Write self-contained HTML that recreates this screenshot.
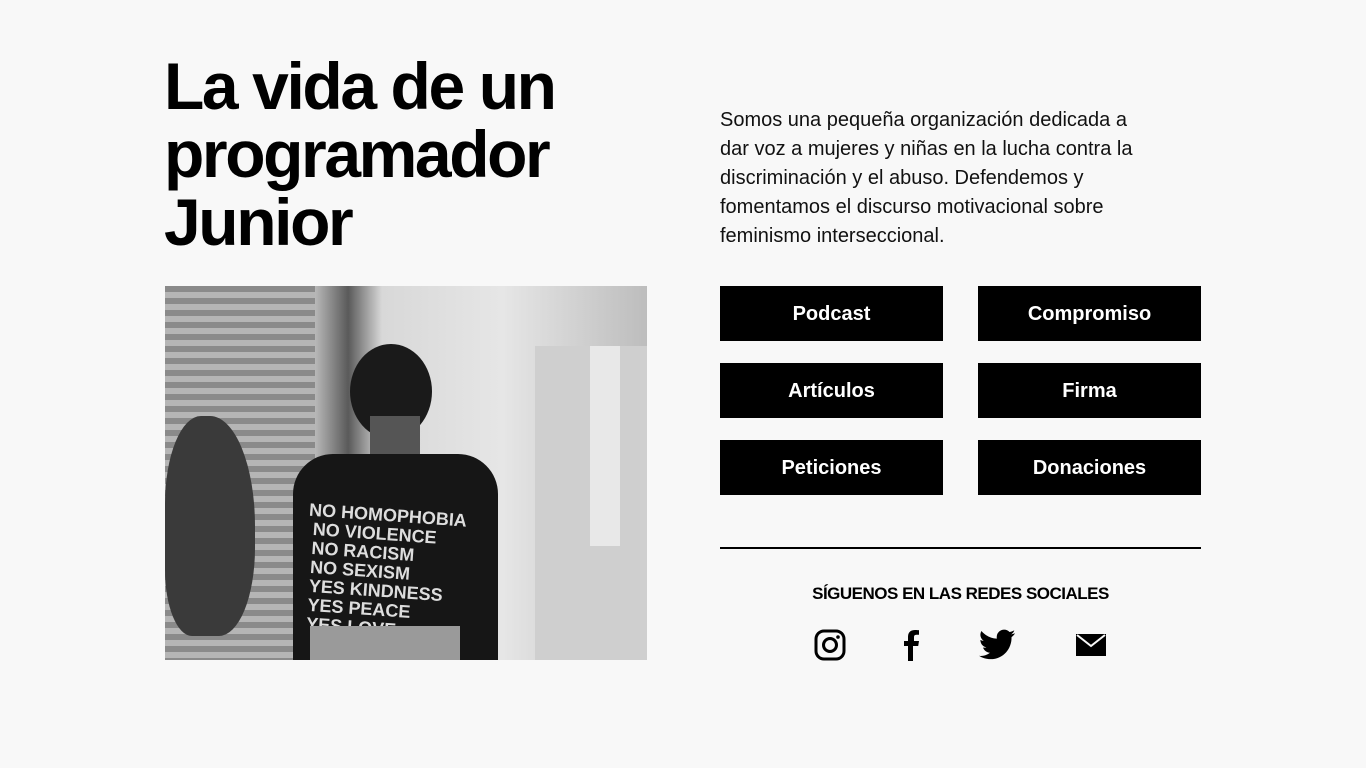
<!DOCTYPE html>
<html><head><meta charset="utf-8"><style>
*{margin:0;padding:0;box-sizing:border-box}
body{width:1366px;height:768px;background:#f8f8f8;font-family:"Liberation Sans",sans-serif;position:relative;overflow:hidden;color:#000}
h1{position:absolute;left:164px;top:52px;font-size:66px;line-height:68px;font-weight:bold;letter-spacing:-2.4px;width:480px}
.photo{position:absolute;left:165px;top:286px;width:482px;height:374px;overflow:hidden;background:linear-gradient(90deg,#9a9a9a 0%,#c8c8c8 30%,#5a5a5a 38%,#d8d8d8 45%,#e6e6e6 70%,#bdbdbd 100%)}
p{position:absolute;left:720px;top:106px;width:436px;font-size:20px;line-height:29px;color:#111}
.btn{position:absolute;width:223px;height:55px;background:#000;color:#fff;font-size:20px;font-weight:bold;text-align:center;line-height:55px;padding-top:1px}
.line{position:absolute;left:720px;top:547px;width:481px;height:2px;background:#000}
.soc{position:absolute;left:720px;width:481px;top:584px;text-align:center;font-size:17px;font-weight:bold;letter-spacing:-0.5px}
svg.i{position:absolute}
</style></head><body>
<h1>La vida de un programador Junior</h1>
<div class="photo">
<div style="position:absolute;left:0;top:0;width:150px;height:374px;background:repeating-linear-gradient(180deg,#8a8a8a 0 6px,#b5b5b5 6px 12px)"></div>
<div style="position:absolute;left:370px;top:60px;width:112px;height:314px;background:#cfcfcf"></div>
<div style="position:absolute;left:425px;top:60px;width:30px;height:200px;background:#e8e8e8"></div>
<div style="position:absolute;left:0;top:130px;width:90px;height:220px;background:#3a3a3a;border-radius:40% 50% 40% 30%"></div>
<div style="position:absolute;left:185px;top:58px;width:82px;height:95px;background:#1a1a1a;border-radius:50%"></div>
<div style="position:absolute;left:205px;top:130px;width:50px;height:50px;background:#555"></div>
<div style="position:absolute;left:128px;top:168px;width:205px;height:206px;background:#161616;border-radius:40px 40px 0 0"></div>
<div style="position:absolute;left:140px;top:220px;color:#ddd;font-weight:bold;font-size:18px;line-height:19px;transform:rotate(4deg)">NO HOMOPHOBIA<br>&nbsp;NO VIOLENCE<br>&nbsp;NO RACISM<br>&nbsp;NO SEXISM<br>&nbsp;YES KINDNESS<br>&nbsp;YES PEACE<br>&nbsp;YES LOVE</div>
<div style="position:absolute;left:145px;top:340px;width:150px;height:34px;background:#9a9a9a"></div>
</div>
<p>Somos una pequeña organización dedicada a dar voz a mujeres y niñas en la lucha contra la discriminación y el abuso. Defendemos y fomentamos el discurso motivacional sobre feminismo interseccional.</p>
<div class="btn" style="left:720px;top:286px">Podcast</div>
<div class="btn" style="left:978px;top:286px">Compromiso</div>
<div class="btn" style="left:720px;top:363px">Artículos</div>
<div class="btn" style="left:978px;top:363px">Firma</div>
<div class="btn" style="left:720px;top:440px">Peticiones</div>
<div class="btn" style="left:978px;top:440px">Donaciones</div>
<div class="line"></div>
<div class="soc">SÍGUENOS EN LAS REDES SOCIALES</div>
<svg class="i" style="left:814px;top:629px" width="32" height="32" viewBox="0 0 32 32"><rect x="2" y="2" width="28" height="28" rx="8" fill="none" stroke="#000" stroke-width="3"/><circle cx="16" cy="16" r="6.5" fill="none" stroke="#000" stroke-width="3"/><circle cx="24" cy="8" r="1.8"/></svg>
<svg class="i" style="left:903px;top:629px" width="18" height="32" viewBox="0 0 18 32"><path d="M5 32V17H1v-5h4V8c0-5 3-7 7-7 2 0 4 .2 4 .2v4.5h-2.5c-2 0-2.5 1-2.5 2.5V12h5l-.8 5H10v15z"/></svg>
<svg class="i" style="left:979px;top:629px" width="37" height="32" viewBox="0 0 24 20"><path d="M23.6 2.3c-.9.4-1.8.6-2.8.8 1-.6 1.8-1.6 2.1-2.7-.9.6-2 1-3.1 1.2C18.9.6 17.7 0 16.3 0c-2.7 0-4.8 2.2-4.8 4.8 0 .4 0 .8.1 1.1C7.6 5.700 4 3.800 1.6.9c-.4.7-.7 1.6-.7 2.4 0 1.7.9 3.2 2.2 4-.8 0-1.5-.2-2.2-.6v.1c0 2.3 1.7 4.3 3.9 4.7-.4.1-.8.2-1.3.2-.3 0-.6 0-.9-.1.6 1.9 2.4 3.3 4.5 3.4-1.7 1.3-3.7 2.1-6 2.1-.4 0-.8 0-1.1-.1 2.1 1.4 4.7 2.2 7.4 2.2 8.9 0 13.7-7.4 13.7-13.7v-.6c.9-.7 1.7-1.5 2.3-2.5z"/></svg>
<svg class="i" style="left:1076px;top:634px" width="30" height="22" viewBox="0 0 30 22"><rect width="30" height="22"/><path d="M1 1l14 11L29 1" fill="none" stroke="#f8f8f8" stroke-width="2"/></svg>
</body></html>
